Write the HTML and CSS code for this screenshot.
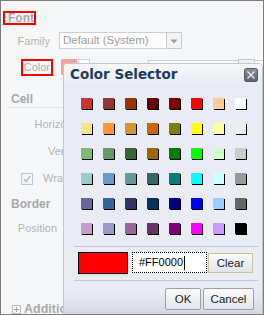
FILE: index.html
```html
<!DOCTYPE html>
<html>
<head>
<meta charset="utf-8">
<link rel="stylesheet" href="styles.css">
</head>
<body>
<div class="frame">
  <div class="panel">
    <div class="sec-font"><span class="hl-font">Font</span></div>
    <div class="row row-family">
      <span class="lbl lbl-font">Family</span>
      <div class="select">
        <span class="select-text">Default (System)</span>
        <span class="select-btn"><svg width="8" height="5" viewBox="0 0 8 5"><path d="M0.5 0.5 L7.5 0.5 L4 4.5 Z" fill="#9b9b9b"/></svg></span>
      </div>
    </div>
    <div class="row row-color">
      <span class="lbl lbl-font"><span class="hl">Color</span></span>
      <span class="color-chip"></span>
      <span class="chip-btn"></span>
      <span class="hidden-field"><span class="hidden-btn"></span></span>
    </div>
    <div class="sec-head">Cell</div>
    <div class="row row-cell"><span class="lbl lbl-cell">Horizontal</span></div>
    <div class="row row-cell"><span class="lbl lbl-cell">Vertical</span></div>
    <div class="row row-cell">
      <span class="checkbox"><svg width="12" height="12" viewBox="0 0 12 12"><rect x="0.5" y="0.5" width="11" height="11" fill="#f4f5f7" stroke="#c3c4c7"/><path d="M3 6.2 L5.2 8.6 L9.2 2.8" fill="none" stroke="#a8b6cb" stroke-width="1.4"/></svg></span>
      <span class="wrap-text">Wrap Text</span>
    </div>
    <div class="sec-head sec-border">Border</div>
    <div class="row row-pos"><span class="lbl lbl-border">Position</span></div>
    <div class="sec-more"><span class="plus"><svg width="9" height="9" viewBox="0 0 9 9"><rect x="0.5" y="0.5" width="8" height="8" fill="#f6f7f9" stroke="#bdbdbd"/><path d="M2 4.5 H7 M4.5 2 V7" stroke="#a5a5a5" stroke-width="1"/></svg></span>Additional</div>
  </div>

  <div class="dialog">
    <div class="dlg-head">
      <span class="dlg-title">Color Selector</span>
      <span class="dlg-close"><svg width="14" height="14" viewBox="0 0 14 14"><defs><linearGradient id="cg" x1="0" y1="0" x2="0" y2="1"><stop offset="0" stop-color="#8a93a1"/><stop offset="1" stop-color="#596271"/></linearGradient></defs><rect x="0.5" y="0.5" width="13" height="13" rx="2" fill="url(#cg)" stroke="#4f5866"/><path d="M3.5 3.5 L10.5 10.5 M10.5 3.5 L3.5 10.5" stroke="#eef0f3" stroke-width="1.3"/></svg></span>
    </div>
    <div class="swatches">
      <span class="sw" style="background:#cc3333"></span><span class="sw" style="background:#993333"></span><span class="sw" style="background:#993300"></span><span class="sw" style="background:#660000"></span><span class="sw" style="background:#800000"></span><span class="sw" style="background:#ff0000"></span><span class="sw" style="background:#ffcc99"></span><span class="sw" style="background:#ffffff"></span>
      <span class="sw" style="background:#f0e68c"></span><span class="sw" style="background:#ff9933"></span><span class="sw" style="background:#cc9933"></span><span class="sw" style="background:#cc6600"></span><span class="sw" style="background:#808000"></span><span class="sw" style="background:#ffff00"></span><span class="sw" style="background:#ffff99"></span><span class="sw" style="background:#eeeeee"></span>
      <span class="sw" style="background:#80b878"></span><span class="sw" style="background:#669966"></span><span class="sw" style="background:#336633"></span><span class="sw" style="background:#996600"></span><span class="sw" style="background:#008000"></span><span class="sw" style="background:#00ff00"></span><span class="sw" style="background:#ccffcc"></span><span class="sw" style="background:#cccccc"></span>
      <span class="sw" style="background:#99cccc"></span><span class="sw" style="background:#6699cc"></span><span class="sw" style="background:#669999"></span><span class="sw" style="background:#336666"></span><span class="sw" style="background:#008080"></span><span class="sw" style="background:#00ffff"></span><span class="sw" style="background:#ccffff"></span><span class="sw" style="background:#999999"></span>
      <span class="sw" style="background:#666699"></span><span class="sw" style="background:#336699"></span><span class="sw" style="background:#333366"></span><span class="sw" style="background:#003366"></span><span class="sw" style="background:#000080"></span><span class="sw" style="background:#0000ff"></span><span class="sw" style="background:#99ccff"></span><span class="sw" style="background:#666666"></span>
      <span class="sw" style="background:#cc99cc"></span><span class="sw" style="background:#9999cc"></span><span class="sw" style="background:#996699"></span><span class="sw" style="background:#663366"></span><span class="sw" style="background:#800080"></span><span class="sw" style="background:#ff00ff"></span><span class="sw" style="background:#cc99ff"></span><span class="sw" style="background:#000000"></span>
    </div>
    <div class="sep sep-1"></div>
    <div class="pick-row">
      <span class="preview"></span>
      <span class="hex-input">#FF0000<span class="caret"></span></span>
      <span class="btn btn-clear">Clear</span>
    </div>
    <div class="sep sep-2"></div>
    <div class="btn-row">
      <span class="btn btn-ok">OK</span>
      <span class="btn btn-cancel">Cancel</span>
    </div>
  </div>
</div>
</body>
</html>
```

FILE: styles.css
```css
* { box-sizing: border-box; }

html, body {
  margin: 0;
  padding: 0;
}

body {
  font-family: "Liberation Sans", Arial, sans-serif;
  font-size: 11px;
  background: #ffffff;
}

.frame {
  position: relative;
  width: 264px;
  height: 315px;
  border: 1px solid #7d7d7d;
  background: #f6f7f9;
  overflow: hidden;
}

.panel {
  padding-top: 12px;
  color: #b3b3b3;
}

.sec-font {
  height: 10px;
  line-height: 10px;
}

.hl-font {
  display: inline-block;
  margin-left: 4px;
  padding-left: 3px;
  font-weight: bold;
  font-size: 12px;
  line-height: 10px;
  color: #a9a9a9;
  outline: 2px solid #ff0000;
}

.row {
  display: flex;
  align-items: center;
}

.lbl {
  text-align: right;
  flex: none;
}

.lbl-font { width: 49px; }
.lbl-cell { width: 83px; }
.lbl-border { width: 56px; }

.row-family {
  margin-top: 9px;
  height: 17px;
}

.select {
  margin-left: 9px;
  width: 123px;
  height: 17px;
  border: 1px solid #cdd0d6;
  background: #fcfcfd;
  display: flex;
  align-items: center;
}

.select-text {
  flex: 1;
  padding-left: 3px;
  color: #a0a0a0;
  font-size: 11.5px;
  line-height: 15px;
}

.select-btn {
  width: 16px;
  height: 17px;
  margin: -1px -1px -1px 0;
  border: 1px solid #c6c9cf;
  background: #f2f3f5;
  display: flex;
  align-items: center;
  justify-content: center;
  padding-top: 1px;
}

.select-btn svg { display: block; }

.row-color {
  margin-top: 9px;
  height: 17px;
  align-items: flex-start;
}

.row-color .lbl {
  padding-top: 3px;
}

.hl {
  display: inline-block;
  line-height: 11px;
  outline: 2px solid #ff0000;
  outline-offset: 1px;
}

.color-chip {
  margin-left: 11px;
  margin-top: 1px;
  width: 16px;
  height: 16px;
  background: #f8a3a3;
  flex: none;
}

.chip-btn {
  margin-left: 1px;
  margin-top: 1px;
  width: 12px;
  height: 15px;
  border: 1px solid #cfd1d5;
  background: #ffffff;
  flex: none;
}

.hidden-field {
  margin-left: 58px;
  margin-top: 2px;
  flex: 1;
  height: 14px;
  border: 1px solid #c9ccd2;
  border-right: none;
  background: #fbfbfc;
  display: flex;
  justify-content: flex-end;
}

.hidden-btn {
  width: 17px;
  margin-top: -2px;
  margin-right: 8px;
  height: 14px;
  border: 1px solid #c3c6cc;
  background: #f0f1f4;
}

.sec-head {
  margin-top: 17px;
  margin-left: 6px;
  padding-left: 4px;
  padding-bottom: 1px;
  line-height: 14px;
  font-size: 12px;
  font-weight: bold;
  color: #a9a9a9;
  border-bottom: 1px solid #dfe1e5;
}

.row-cell {
  height: 27px;
  line-height: 27px;
}

.sec-head + .row-cell { margin-top: 3px; }

.checkbox {
  margin-left: 20px;
  width: 12px;
  height: 12px;
  flex: none;
}

.checkbox svg { display: block; }

.wrap-text { margin-left: 10px; }

.sec-border {
  margin-top: 5px;
  border-bottom: none;
  padding-bottom: 0;
}

.row-pos {
  margin-top: 4px;
  height: 26px;
  line-height: 26px;
}

.sec-more {
  margin-top: 61px;
  margin-left: 11px;
  line-height: 14px;
  font-size: 12.5px;
  font-weight: bold;
  color: #a9a9a9;
  display: flex;
  align-items: center;
}

.plus {
  width: 9px;
  height: 9px;
  margin-right: 3px;
  margin-top: 1px;
}

.plus svg { display: block; }

/* dialog */
.dialog {
  position: absolute;
  left: 62px;
  top: 62px;
  width: 200px;
  height: 260px;
  border: 1px solid #c3c7d2;
  border-radius: 4px 4px 0 0;
  background: linear-gradient(to bottom, #e9ecf4 0, #e9ecf4 228px, #cfd2db 256px);
  color: #1b1b1b;
}

.dlg-head {
  height: 21px;
  display: flex;
  align-items: center;
  justify-content: space-between;
  padding: 0 4px 0 6px;
  border-radius: 3px 3px 0 0;
  background: linear-gradient(to bottom, #f5f6f9, #eaedf4);
}

.dlg-title {
  font-family: "DejaVu Sans", "Liberation Sans", sans-serif;
  font-size: 13.5px;
  font-weight: bold;
  line-height: 21px;
  color: #1f3b5c;
}

.dlg-close {
  width: 14px;
  height: 14px;
}

.dlg-close svg { display: block; }

.swatches {
  margin-top: 13px;
  margin-left: 17px;
  display: grid;
  grid-template-columns: repeat(8, 11px);
  column-gap: 11px;
  row-gap: 14px;
}

.sw {
  width: 11px;
  height: 11px;
  box-shadow: 1px 1px 0 #000000;
}

.sep {
  height: 1px;
  background: #c5c8d0;
  margin: 0 4px 0 10px;
}

.sep-1 { margin-top: 12px; }
.sep-2 { margin-top: 6px; }

.pick-row {
  margin-top: 5px;
  height: 22px;
  display: flex;
  align-items: flex-start;
}

.preview {
  margin-left: 14px;
  width: 50px;
  height: 22px;
  border: 1px solid #000000;
  background: #ff0000;
  box-shadow: 0 1px 0 #d8dbe2;
}

.hex-input {
  margin-left: 4px;
  width: 75px;
  height: 21px;
  border: 1px dotted #000000;
  background: #ffffff;
  padding-left: 6px;
  line-height: 19px;
  font-size: 11px;
  color: #000000;
  display: flex;
  align-items: center;
}

.caret {
  display: inline-block;
  width: 1px;
  height: 14px;
  background: #000000;
  margin-left: 1px;
}

.btn {
  display: flex;
  align-items: center;
  justify-content: center;
  border: 1px solid #9c9fa6;
  border-radius: 2px;
  background: linear-gradient(to bottom, #fbfbfc, #e2e5eb);
  color: #1b1b1b;
  font-size: 11.5px;
}

.btn-clear {
  margin-left: 1px;
  margin-top: 1px;
  width: 45px;
  height: 20px;
  border-color: #c9c29a;
  border-radius: 0;
}

.btn-row {
  margin-top: 7px;
  height: 22px;
  display: flex;
  justify-content: flex-end;
  gap: 2px;
  padding-right: 8px;
}

.btn-ok {
  width: 36px;
  height: 22px;
}

.btn-cancel {
  width: 51px;
  height: 22px;
}
```
